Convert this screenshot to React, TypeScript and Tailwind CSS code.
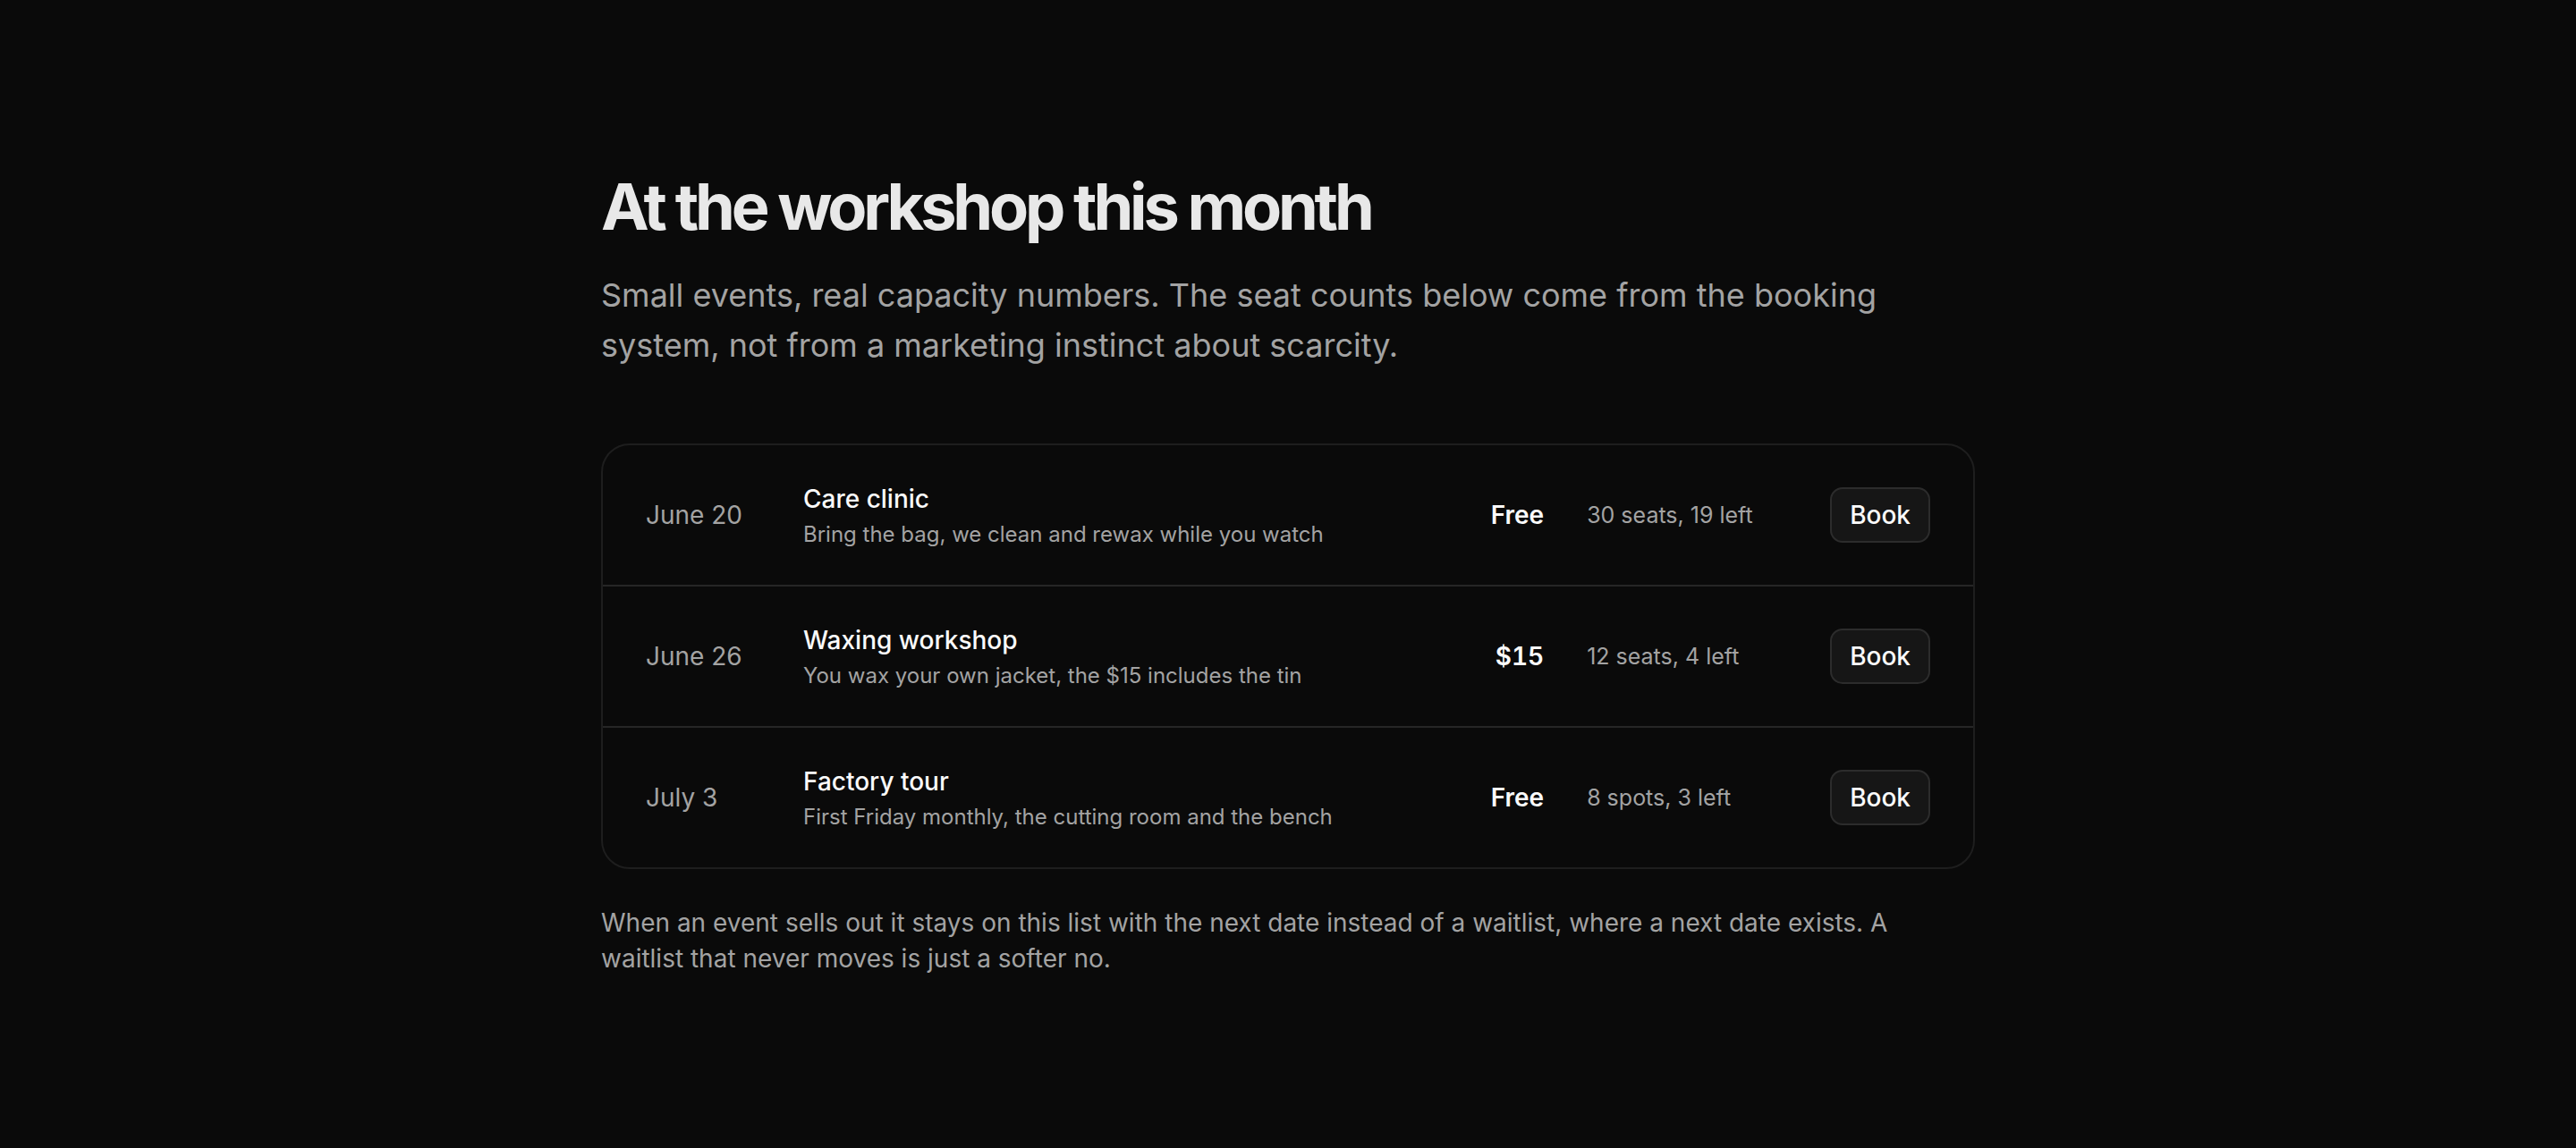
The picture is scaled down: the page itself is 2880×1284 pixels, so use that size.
import React from 'react';

interface EventRow {
  date: string;
  title: string;
  description: string;
  price: string;
  capacity: string;
}

const events: EventRow[] = [
  {
    date: 'June 20',
    title: 'Care clinic',
    description: 'Bring the bag, we clean and rewax while you watch',
    price: 'Free',
    capacity: '30 seats, 19 left',
  },
  {
    date: 'June 26',
    title: 'Waxing workshop',
    description: 'You wax your own jacket, the $15 includes the tin',
    price: '$15',
    capacity: '12 seats, 4 left',
  },
  {
    date: 'July 3',
    title: 'Factory tour',
    description: 'First Friday monthly, the cutting room and the bench',
    price: 'Free',
    capacity: '8 spots, 3 left',
  },
];

const App: React.FC = () => {
  return (
    <div
      className="min-h-screen bg-[#0a0a0a] text-[#ededed]"
      style={{ fontFamily: 'Inter, "Noto Sans", sans-serif' }}
    >
      <div className="mx-auto max-w-[1536px] pt-[195px] pb-40">
        {/* ヘッダー */}
        <h1 className="text-7xl leading-none font-bold tracking-[-0.058em] text-[#e8e8e8]">
          At the workshop this month
        </h1>
        <p className="mt-[35px] text-4xl leading-[56px] text-[#a3a3a3]">
          Small events, real capacity numbers. The seat counts below come from the booking
          system, not from a marketing instinct about scarcity.
        </p>

        {/* イベント一覧 */}
        <div className="mt-[82px] rounded-[32px] border-2 border-[#1e1e1e] divide-y-2 divide-[#262626]">
          {events.map((event) => (
            <div key={event.title} className="flex items-center gap-12 px-12 py-10">
              <div className="w-32 text-[28px] leading-10 text-[#a3a3a3]">{event.date}</div>
              <div className="flex-1 min-w-0">
                <div className="text-[28px] leading-10 font-medium text-[#fafafa]">
                  {event.title}
                </div>
                <div className="mt-1 text-2xl leading-8 text-[#a3a3a3]">{event.description}</div>
              </div>
              <div className="w-32 text-right text-[28px] leading-10 font-semibold tabular-nums text-[#fafafa]">
                {event.price}
              </div>
              <div className="w-56 text-[25px] leading-9 text-[#a3a3a3]">{event.capacity}</div>
              <button className="rounded-[14px] border-2 border-[#2c2c2c] bg-[#161616] px-5 py-[9px] text-[28px] leading-10 font-medium text-[#fafafa]">
                Book
              </button>
            </div>
          ))}
        </div>

        <p className="mt-10 text-[28px] leading-10 text-[#a3a3a3]">
          When an event sells out it stays on this list with the next date instead of a
          waitlist, where a next date exists. A waitlist that never moves is just a softer no.
        </p>
      </div>
    </div>
  );
};

export default App;
